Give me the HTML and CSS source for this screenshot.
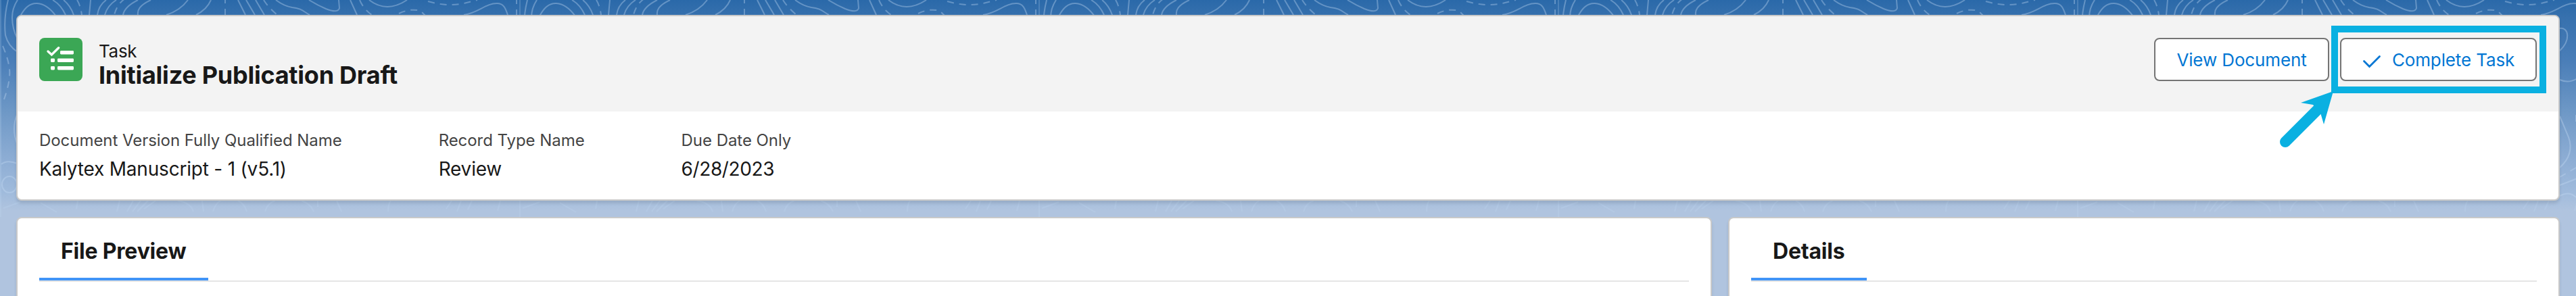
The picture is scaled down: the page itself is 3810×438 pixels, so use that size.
FILE: index.html
```
<!DOCTYPE html>
<html lang="en">

<head>
    <meta charset="UTF-8">
    <meta name="viewport" content="width=device-width, initial-scale=1.0">
    <title>Initialize Publication Draft | Task</title>

    <link rel="stylesheet" href="styles.css">
</head>

<body>
    <!-- contour map behind the cards -->
    <svg class="backdrop" width="3810" height="321" aria-hidden="true">
        <defs>
            <pattern id="contours" width="768" height="321" patternUnits="userSpaceOnUse">
                <g class="lines">
                    <path d="M12 0C7 20 6 34 8 52Q12 68 26 77"/>
                    <path d="M26 0Q18 12 18 26C18 40 22 50 26 58"/>
                    <path d="M30 24Q40 4 55 5T83 24"/>
                    <path d="M78 0Q90 7 97 22M94 0Q104 8 109 22"/>
                    <path d="M134 0L132 22M157 0Q146 8 144 22M172 0Q159 8 155 22"/>
                    <path d="M204 0Q184 10 182 22M223 0C206 8 203 15 204 22"/>
                    <path d="M278 0Q266 16 246 22M312 0Q306 14 290 22"/>
                    <path d="M352 0L363 22M364 0L377 22M378 0L391 22"/>
                    <path d="M408 0Q420 9 432 11C446 12 450 18 458 22"/>
                    <path d="M457 0Q470 8 482 13Q500 20 502 12L501 0"/>
                    <path d="M518 0L528 22M546 0Q572 20 602 0"/>
                    <path d="M686 22C706 20 718 5 735 5C746 5 748 14 751 22"/>
                    <path d="M25 170Q17 190 25 212M2 243Q10 236 26 242"/>
                    <ellipse cx="14" cy="273" rx="11" ry="12"/>
                    <path d="M714 42C728 40 730 60 714 75"/>
                    <path d="M714 118Q727 124 740 116"/>
                    <path d="M714 172L727 203Q736 228 714 248M714 274L740 264"/>
                    <path d="M714 290Q728 282 738 292"/>
                </g>
                <g class="lines dashed">
                    <path d="M114 0Q119 8 121 22M185 -2Q173 6 169 22"/>
                    <path d="M333 -5V22M390 0Q396 10 410 22M532 0Q538 14 550 22"/>
                    <path d="M590 20Q606 12 622 16L632 26M633 2Q664 11 690 4L706 0"/>
                    <path d="M764 -4V22"/>
                    <path d="M4 68Q12 86 14 102T6 147M714 262L740 247"/>
                    <path d="M738 170V182"/>
                </g>
                <g class="lines faint">
                    <path d="M1 0V321"/>
                    <path d="M5 308L30 299M60 300L84 314M115 297L113 309M177 297L173 313M197 297L188 313M208 297L196 313M219 297L203 313M230 297L213 309"/>
                    <path d="M263 297Q282 300 286 313M299 297L301 313M315 313Q318 302 326 297M352 297Q362 302 365 313M392 313Q396 300 407 297M446 297Q460 302 464 313M470 297V306M498 297L505 313M574 313Q574 302 578 297"/>
                    <path d="M660 309L668 297M676 313L682 297M692 310L698 297M740 297L736 312"/>
                </g>
            </pattern>
        </defs>
        <rect width="3810" height="321" fill="url(#contours)"/>
    </svg>

    <main class="page">
        <section class="card record">
            <header class="record-header">
                <svg class="task-icon" viewBox="0 0 64 64">
                    <rect width="64" height="64" rx="8" fill="#3ba755"/>
                    <path d="M13 20L18.4 25L28.7 14.7" fill="none" stroke="#fff" stroke-width="3.4" stroke-linecap="round"/>
                    <g fill="#fff">
                        <rect x="31" y="19" width="20" height="5.4" rx="1.4"/>
                        <rect x="17" y="30.6" width="6" height="5.4" rx="1.4"/>
                        <rect x="27" y="30.6" width="24" height="5.4" rx="1.4"/>
                        <rect x="17" y="42" width="6" height="5.4" rx="1.4"/>
                        <rect x="27" y="42" width="24" height="5.4" rx="1.4"/>
                    </g>
                </svg>
                <div class="heading">
                    <div class="type">Task</div>
                    <h1>Initialize Publication Draft</h1>
                </div>
                <div class="actions">
                    <button class="btn btn-view">View Document</button>
                    <button class="btn btn-complete">
                        <svg class="check" viewBox="0 0 28 22">
                            <path d="M2.5 10.5L10.5 18.5L25.5 3.5" fill="none" stroke="#0176d3" stroke-width="2.8" stroke-linecap="round"/>
                        </svg>
                        Complete Task
                    </button>
                </div>
            </header>
            <dl class="fields">
                <div class="field">
                    <dt>Document Version Fully Qualified Name</dt>
                    <dd>Kalytex Manuscript - 1 (v5.1)</dd>
                </div>
                <div class="field">
                    <dt>Record Type Name</dt>
                    <dd>Review</dd>
                </div>
                <div class="field">
                    <dt>Due Date Only</dt>
                    <dd class="date">6/28/2023</dd>
                </div>
            </dl>
        </section>

        <div class="columns">
            <section class="card panel">
                <div class="tabs"><h2 class="tab">File Preview</h2></div>
            </section>
            <section class="card panel">
                <div class="tabs"><h2 class="tab">Details</h2></div>
            </section>
        </div>
    </main>

    <!-- callout on the Complete Task button -->
    <div class="callout"></div>
    <svg class="arrow" viewBox="0 0 84 90">
        <path d="M12 75L61 26" class="shaft"/>
        <path d="M83 0L35 17L53 20L64 32L69 49Z" class="head"/>
    </svg>
</body>

</html>
```
FILE: styles.css
```
* {
    margin: 0;
    padding: 0;
    box-sizing: border-box;
}

body {
    height: 438px;
    font-family: Inter, "Liberation Sans", sans-serif;
    color: #181818;
    background: #b0c4df linear-gradient(#2a69a9 0, #3771ae 26px, #4a7eb8 90px, #6e98c6 165px, #8dadd4 235px, #a0bbdc 285px, #b0c4df 312px) no-repeat;
}

.backdrop {
    position: absolute;
    top: 0;
    left: 0;
}

.lines {
    fill: none;
    stroke: #c5dcf5;
    stroke-opacity: .36;
    stroke-width: 2;
}

.dashed {
    stroke-dasharray: 10 8;
}

.faint {
    stroke-opacity: .2;
}

.page {
    position: relative;
    display: flex;
    flex-direction: column;
    gap: 24px;
    padding: 22px 24px 0;
}

.card {
    background: #fff;
    border: 2px solid #c9c9c9;
    border-radius: 8px;
    box-shadow: 0 4px 4px rgba(0, 0, 0, .1);
}

.record {
    height: 275px;
}

.record-header {
    display: flex;
    height: 141px;
    padding: 32px;
    background: #f3f3f3;
    border-radius: 6px 6px 0 0;
}

.task-icon {
    width: 64px;
    height: 64px;
}

.heading {
    padding: 5px 0 0 24px;
}

.type {
    font-size: 26px;
    line-height: 30px;
    letter-spacing: -.3px;
}

h1 {
    font-size: 36px;
    line-height: 40px;
    letter-spacing: -.25px;
}

.actions {
    display: flex;
    gap: 16px;
    margin-left: auto;
}

.btn {
    display: flex;
    align-items: center;
    justify-content: center;
    height: 64px;
    font-family: inherit;
    font-size: 26px;
    letter-spacing: -.13px;
    color: #0176d3;
    background: #fff;
    border: 2px solid #747474;
    border-radius: 8px;
}

.btn-view {
    width: 259px;
}

.btn-complete {
    width: 291px;
}

.check {
    width: 28px;
    height: 22px;
    margin: 5px 16px 0 0;
}

.fields {
    display: flex;
    gap: 143px;
    padding: 25px 32px 0;
}

dt {
    font-size: 24px;
    line-height: 36px;
    letter-spacing: -.05px;
    color: #444;
}

dd {
    margin-top: 3px;
    font-size: 28px;
    line-height: 42px;
    letter-spacing: -.2px;
}

.date {
    letter-spacing: -.4px;
}

.columns {
    display: grid;
    grid-template-columns: 2508px 1fr;
    gap: 24px;
}

.panel {
    height: 117px;
    padding: 0 32px;
    border-bottom: 0;
    border-radius: 8px 8px 0 0;
}

.tabs {
    display: flex;
    height: 94px;
    border-bottom: 2px solid #e5e5e5;
}

.tab {
    padding: 9px 32px 0;
    font-size: 32px;
    line-height: 79px;
    letter-spacing: -.2px;
    border-bottom: 4px solid #4094f7;
}

.callout {
    position: absolute;
    top: 38px;
    left: 3448px;
    width: 318px;
    height: 100px;
    border: 10px solid #0ab0e1;
}

.arrow {
    position: absolute;
    top: 135px;
    left: 3368px;
    width: 84px;
    height: 90px;
}

.shaft {
    stroke: #0ab0e1;
    stroke-width: 16;
    stroke-linecap: round;
}

.head {
    fill: #0ab0e1;
}
```
